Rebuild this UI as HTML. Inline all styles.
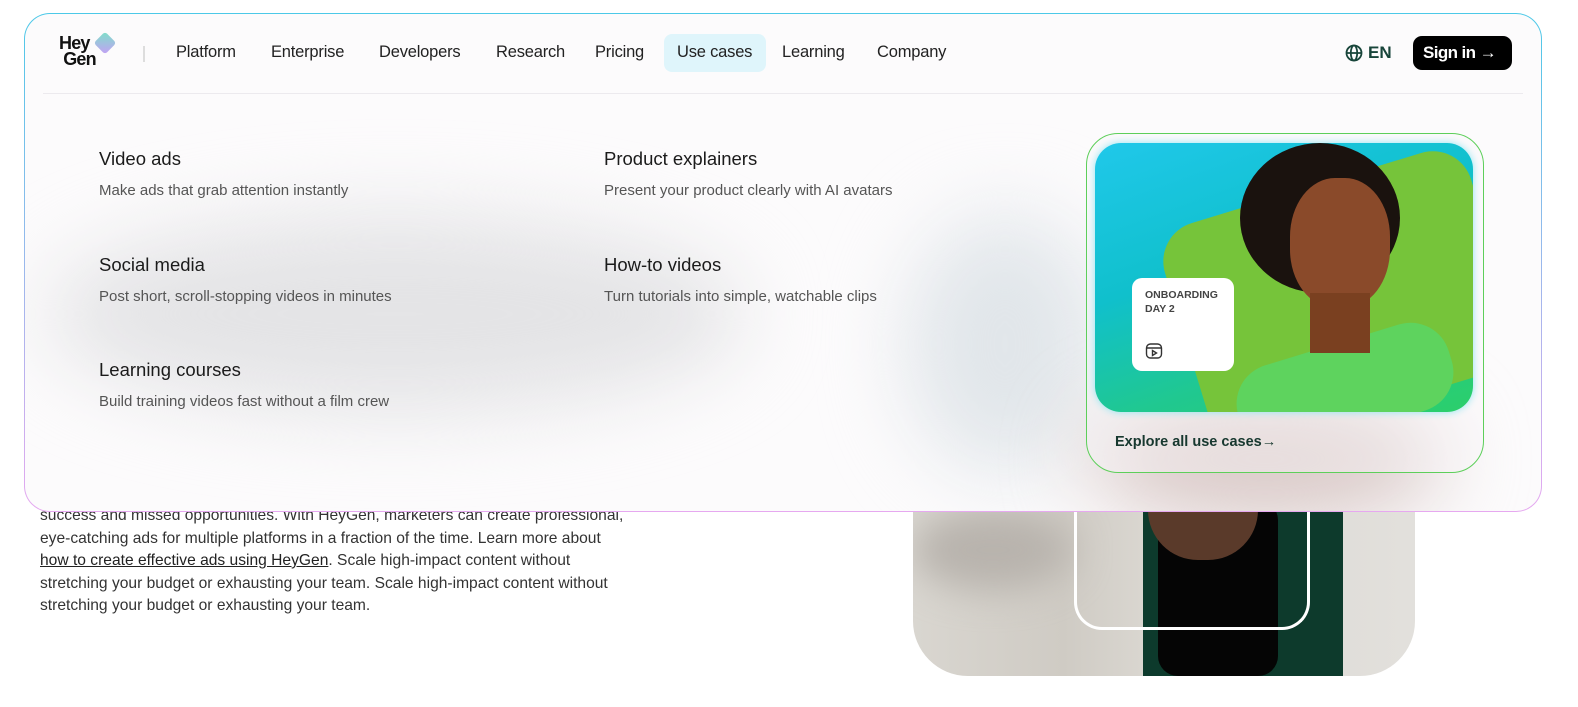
<!DOCTYPE html>
<html><head><style>
*{margin:0;padding:0;box-sizing:border-box}
html,body{width:1578px;height:707px;overflow:hidden}
body{background:#fff;position:relative;font-family:"Liberation Sans",sans-serif}
.bgtext{position:absolute;left:40px;top:505px;width:640px;font-size:15.6px;line-height:22.5px;color:#333;letter-spacing:0;white-space:nowrap}
.bgtext u{color:#222}
.photo{position:absolute;left:913px;top:470px;width:502px;height:206px;border-radius:0 0 55px 55px;overflow:hidden;background:linear-gradient(90deg,#d9d6d0 0%,#cfcbc4 30%,#dcd9d3 50%,#e2e0dc 100%)}
.panel{position:absolute;left:24px;top:13px;width:1518px;height:499px;border-radius:26px;border:1.5px solid transparent;background-image:linear-gradient(#fcfbfc,#fcfbfc),linear-gradient(180deg,#4cc9e8,#e6a8f0);background-origin:border-box;background-clip:padding-box,border-box;overflow:hidden}
.nav{position:absolute;top:0;left:18px;width:1480px;height:80px;border-bottom:1px solid #eceaee}
.nv{position:absolute;top:29px;font-size:16.5px;color:#222;letter-spacing:-0.2px}
.item{position:absolute}
.item h3{font-size:18.5px;font-weight:normal;color:#1b1b1b;margin-bottom:12px}
.item p{font-size:15px;color:#555}
.smudge{position:absolute;border-radius:50%;filter:blur(40px);background:#e4e4e6}
</style></head><body>
<div class="bgtext">success and missed opportunities. With HeyGen, marketers can create professional,<br>eye-catching ads for multiple platforms in a fraction of the time. Learn more about<br><u>how to create effective ads using HeyGen</u>. Scale high-impact content without<br>stretching your budget or exhausting your team. Scale high-impact content without<br>stretching your budget or exhausting your team.</div>
<div class="photo">
 <div style="position:absolute;left:0;top:40px;width:160px;height:80px;background:#b8b3ad;filter:blur(18px);border-radius:50%"></div>
 <div style="position:absolute;left:230px;top:0;width:200px;height:206px;background:#0d3a2c"></div>
 <div style="position:absolute;left:245px;top:30px;width:120px;height:176px;background:#050505;border-radius:20px"></div>
 <div style="position:absolute;left:235px;top:0;width:110px;height:90px;background:#5a3a2a;border-radius:0 0 50px 50px"></div>
 <div style="position:absolute;left:161px;top:0;width:236px;height:160px;border:3px solid #fff;border-top:none;border-radius:0 0 28px 28px"></div>
</div>
<div class="panel">
 <div class="smudge" style="left:20px;top:200px;width:700px;height:200px"></div>
 <div class="smudge" style="left:880px;top:200px;width:200px;height:260px;background:#e1e6ea"></div>
 <div class="smudge" style="left:1060px;top:380px;width:360px;height:130px;background:#d9c9c7"></div>
 <div class="nav">
  <div style="position:absolute;left:16px;top:21px;font-weight:bold;font-size:18px;line-height:16px;color:#111;letter-spacing:-0.8px">Hey<br>&nbsp;Gen</div>
  <div style="position:absolute;left:54px;top:21px;width:16px;height:16px;transform:rotate(45deg);background:linear-gradient(135deg,#7de0c8,#c4a0f5);border-radius:3px"></div>
  <div style="position:absolute;left:100px;top:32px;width:2px;height:16px;background:#ddd"></div>
  <div style="position:absolute;left:621px;top:20px;width:102px;height:38px;background:#dff5fb;border-radius:8px"></div>
  <span class="nv" style="left:133px">Platform</span>
  <span class="nv" style="left:228px">Enterprise</span>
  <span class="nv" style="left:336px">Developers</span>
  <span class="nv" style="left:453px">Research</span>
  <span class="nv" style="left:552px">Pricing</span>
  <span class="nv" style="left:634px">Use cases</span>
  <span class="nv" style="left:739px">Learning</span>
  <span class="nv" style="left:834px">Company</span>
  <div style="position:absolute;left:1302px;top:29px;font-weight:bold;font-size:17px;color:#18453a;display:flex;align-items:center;gap:5px"><svg width="18" height="18" viewBox="0 0 18 18" fill="none" stroke="#18453a" stroke-width="1.8"><circle cx="9" cy="9" r="7.5"/><ellipse cx="9" cy="9" rx="3.2" ry="7.5"/><path d="M1.5 9h15"/></svg>EN</div>
  <div style="position:absolute;left:1370px;top:22px;width:99px;height:34px;background:#000;border-radius:9px;color:#fff;font-weight:bold;font-size:17px;line-height:34px;padding-left:10px;letter-spacing:-0.6px">Sign in &#x2192;</div>
 </div>
 <div class="item" style="left:74px;top:134px"><h3>Video ads</h3><p>Make ads that grab attention instantly</p></div>
 <div class="item" style="left:579px;top:134px"><h3>Product explainers</h3><p>Present your product clearly with AI avatars</p></div>
 <div class="item" style="left:74px;top:240px"><h3>Social media</h3><p>Post short, scroll-stopping videos in minutes</p></div>
 <div class="item" style="left:579px;top:240px"><h3>How-to videos</h3><p>Turn tutorials into simple, watchable clips</p></div>
 <div class="item" style="left:74px;top:345px"><h3>Learning courses</h3><p>Build training videos fast without a film crew</p></div>
 <div style="position:absolute;left:1061px;top:119px;width:398px;height:340px;border:1.5px solid #5dcf5a;border-radius:32px;background:rgba(250,248,250,0.4)">
  <div style="position:absolute;left:8px;top:9px;width:378px;height:269px;border-radius:26px;background:linear-gradient(160deg,#20c8ea 0%,#10c0cc 40%,#20c890 70%,#2ccf6a 100%);overflow:hidden;box-shadow:0 0 8px #8fe6f2">
   <div style="position:absolute;left:85px;top:40px;width:320px;height:230px;background:#76c43a;border-radius:40px;transform:rotate(-17deg)"></div>
   <div style="position:absolute;left:140px;top:200px;width:220px;height:90px;background:#5ed35e;border-radius:40px;transform:rotate(-17deg)"></div>
   <div style="position:absolute;left:145px;top:0;width:160px;height:150px;background:#1a120e;border-radius:50%"></div>
   <div style="position:absolute;left:195px;top:35px;width:100px;height:130px;background:#8a4a2a;border-radius:45%"></div>
   <div style="position:absolute;left:215px;top:150px;width:60px;height:60px;background:#7a4020"></div>
   <div style="position:absolute;left:37px;top:135px;width:102px;height:93px;background:#fff;border-radius:10px;padding:10px 13px;font-size:10.5px;color:#444;line-height:14px;font-weight:bold">ONBOARDING<br>DAY 2
    <svg style="position:absolute;left:13px;top:64px" width="18" height="18" viewBox="0 0 18 18" fill="none" stroke="#333" stroke-width="1.4"><rect x="1.5" y="2" width="15" height="14" rx="4"/><path d="M1.5 6h15M7.5 8.5v5l4-2.5z"/></svg></div>
  </div>
  <div style="position:absolute;left:28px;top:300px;font-size:14.5px;color:#17382f;font-weight:bold">Explore all use cases&#x2192;</div>
 </div>
</div>
</body></html>
